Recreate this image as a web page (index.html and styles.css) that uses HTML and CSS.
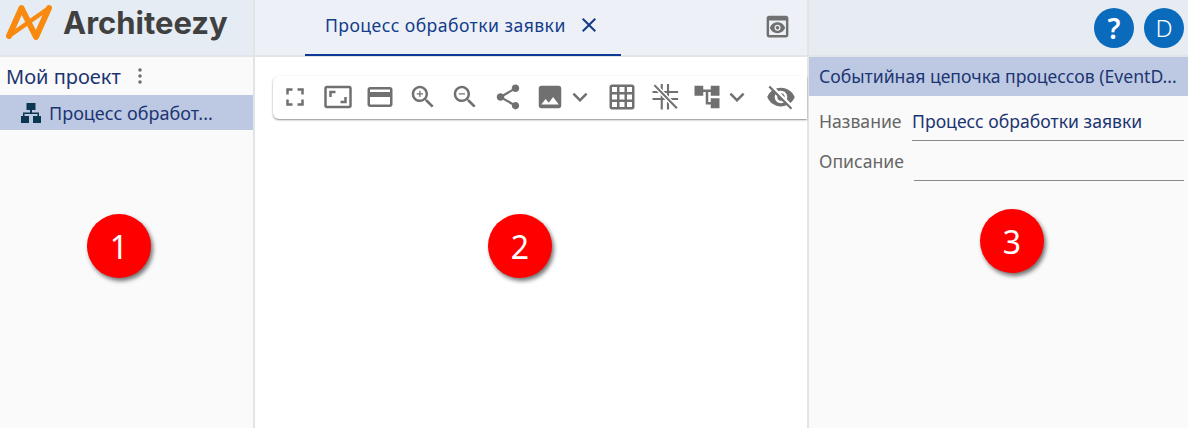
FILE: index.html
```html
<!DOCTYPE html>
<html>
<head>
  <title>Architeezy</title>
  <link rel="stylesheet" href="styles.css">
</head>
<body>
  <div class="app">
    <div class="col col-left">
      <div class="head head-left">
        <svg class="logo" viewBox="0 0 57 55" fill="none" stroke="#f98a10" stroke-linecap="round" stroke-linejoin="round">
          <path d="M9 36 21.500 8 36 37 49 8" stroke-width="6"/>
          <path d="M9 36 49 8" stroke-width="4.500"/>
        </svg>
        <span class="brand">Architeezy</span>
      </div>
      <div class="panel">
        <div class="project">
          <span>Мой проект</span>
          <svg class="dots" viewBox="0 0 6 18" fill="#6f6f6f"><circle cx="3" cy="3" r="1.800"/><circle cx="3" cy="9" r="1.800"/><circle cx="3" cy="15" r="1.800"/></svg>
        </div>
        <div class="tree-row">
          <svg class="tree-icon" viewBox="0 0 20 20" fill="#0c3551"><path d="M5.500 0h9v7H11v2.500h7V13h2v7h-8v-7h4.500v-2h-13v2H8v7H0v-7h2V9.500h7V7H5.500z"/></svg>
          <span class="ellipsis">Процесс обработ...</span>
        </div>
        <div class="marker marker-1">1</div>
      </div>
    </div>

    <div class="col col-mid">
      <div class="head head-mid">
        <div class="tab">
          <span>Процесс обработки заявки</span>
          <svg class="tab-close" viewBox="0 0 24 24" fill="#143c84"><path d="M19 6.410 17.590 5 12 10.590 6.410 5 5 6.410 10.590 12 5 17.590 6.410 19 12 13.410 17.590 19 19 17.590 13.410 12z"/></svg>
        </div>
        <svg class="preview" viewBox="0 0 24 24" fill="#707070"><path fill-rule="evenodd" d="M19 3H5c-1.110 0-2 .9-2 2v14c0 1.100.89 2 2 2h14c1.100 0 2-.9 2-2V5c0-1.100-.89-2-2-2zM5 7h14v12H5z"/><path d="M12 8.500c-2.900 0-5.300 1.800-6.300 4.500 1 2.700 3.400 4.500 6.300 4.500s5.300-1.800 6.300-4.500c-1-2.700-3.400-4.500-6.300-4.500zm0 7a2.500 2.500 0 1 1 0-5 2.500 2.500 0 0 1 0 5zm0-4a1.500 1.500 0 1 0 0 3 1.500 1.500 0 0 0 0-3z"/></svg>
      </div>
      <div class="panel panel-white">
        <div class="toolbar">
          <svg class="ico i-first" viewBox="0 0 24 24"><path d="M7 14H5v5h5v-2H7v-3zm-2-4h2V7h3V5H5v5zm12 7h-3v2h5v-5h-2v3zM14 5v2h3v3h2V5h-5z"/></svg>
          <svg class="ico" viewBox="0 0 24 24"><path d="M19 12h-2v3h-3v2h5v-5zM7 9h3V7H5v5h2V9zm14-6H3c-1.100 0-2 .9-2 2v14c0 1.100.9 2 2 2h18c1.100 0 2-.9 2-2V5c0-1.100-.9-2-2-2zm0 16.010H3V4.990h18v14.020z"/></svg>
          <svg class="ico" viewBox="0 0 24 24"><path d="M20 4H4c-1.110 0-1.990.89-1.990 2L2 18c0 1.110.89 2 2 2h16c1.110 0 2-.89 2-2V6c0-1.110-.89-2-2-2zm0 14H4v-6h16v6zm0-10H4V6h16v2z"/></svg>
          <svg class="ico" viewBox="0 0 24 24"><path d="M15.500 14h-.79l-.28-.27C15.410 12.590 16 11.110 16 9.500 16 5.910 13.090 3 9.500 3S3 5.910 3 9.500 5.910 16 9.500 16c1.610 0 3.090-.59 4.230-1.570l.27.28v.79l5 4.990L20.490 19l-4.990-5zm-6 0C7.010 14 5 11.990 5 9.500S7.010 5 9.500 5 14 7.010 14 9.500 11.990 14 9.500 14z"/><path d="M12 10h-2v2H9v-2H7V9h2V7h1v2h2v1z"/></svg>
          <svg class="ico" viewBox="0 0 24 24"><path d="M15.500 14h-.79l-.28-.27C15.410 12.590 16 11.110 16 9.500 16 5.910 13.090 3 9.500 3S3 5.910 3 9.500 5.910 16 9.500 16c1.610 0 3.090-.59 4.230-1.570l.27.28v.79l5 4.990L20.490 19l-4.990-5zm-6 0C7.010 14 5 11.990 5 9.500S7.010 5 9.500 5 14 7.010 14 9.500 11.990 14 9.500 14z"/><path d="M7 9h5v1H7z"/></svg>
          <svg class="ico" viewBox="0 0 24 24"><path d="M18 16.080c-.76 0-1.440.3-1.960.77L8.910 12.700c.05-.23.09-.46.09-.7s-.04-.47-.09-.7l7.050-4.110c.54.5 1.250.81 2.040.81 1.660 0 3-1.340 3-3s-1.340-3-3-3-3 1.340-3 3c0 .24.04.47.09.7L8.040 9.810C7.500 9.310 6.790 9 6 9c-1.660 0-3 1.340-3 3s1.340 3 3 3c.79 0 1.500-.31 2.040-.81l7.120 4.160c-.05.21-.08.43-.08.65 0 1.610 1.310 2.920 2.920 2.920 1.610 0 2.920-1.310 2.920-2.920s-1.310-2.920-2.920-2.920z"/></svg>
          <svg class="ico" viewBox="0 0 24 24"><path d="M21 19V5c0-1.100-.9-2-2-2H5c-1.100 0-2 .9-2 2v14c0 1.100.9 2 2 2h14c1.100 0 2-.9 2-2zM8.500 13.500l2.500 3.010L14.500 12l4.500 6H5l3.500-4.500z"/></svg>
          <svg class="ico i-chevron" viewBox="0 0 24 24"><path d="M16.590 8.590 12 13.170 7.410 8.590 6 10l6 6 6-6z"/></svg>
          <svg class="ico" viewBox="0 0 24 24"><path d="M20 2H4c-1.100 0-2 .9-2 2v16c0 1.100.9 2 2 2h16c1.100 0 2-.9 2-2V4c0-1.100-.9-2-2-2zM8 20H4v-4h4v4zm0-6H4v-4h4v4zm0-6H4V4h4v4zm6 12h-4v-4h4v4zm0-6h-4v-4h4v4zm0-6h-4V4h4v4zm6 12h-4v-4h4v4zm0-6h-4v-4h4v4zm0-6h-4V4h4v4z"/></svg>
          <svg class="ico i-snap" viewBox="0 0 24 24"><path d="M9.400 1.500V22M14.400 1.500V22M2 8h20.500M2 13.600h20.500"/><path class="snap-gap" d="M3.500 2.500 21.500 21"/><path d="M3.500 2.500 21.500 21"/></svg>
          <svg class="ico" viewBox="0 0 24 24"><path d="M22 11V3h-7v3H9V3H2v8h7V8h2v10h4v3h7v-8h-7v3h-2V8h2v3z"/></svg>
          <svg class="ico i-chevron" viewBox="0 0 24 24"><path d="M16.590 8.590 12 13.170 7.410 8.590 6 10l6 6 6-6z"/></svg>
          <svg class="ico i-last" viewBox="0 0 24 24"><path d="M12 7c2.760 0 5 2.240 5 5 0 .65-.13 1.260-.36 1.830l2.920 2.920c1.510-1.260 2.700-2.890 3.430-4.750-1.730-4.390-6-7.500-11-7.500-1.400 0-2.740.25-3.980.7l2.160 2.160C10.740 7.130 11.350 7 12 7zM2 4.270l2.280 2.280.46.46C3.080 8.300 1.780 10.020 1 12c1.730 4.390 6 7.500 11 7.500 1.550 0 3.030-.3 4.380-.84l.42.42L19.730 22 21 20.730 3.270 3 2 4.270zM7.530 9.800l1.550 1.550c-.05.21-.08.43-.08.65 0 1.660 1.340 3 3 3 .22 0 .44-.03.65-.08l1.550 1.550c-.67.33-1.410.53-2.200.53-2.760 0-5-2.240-5-5 0-.79.2-1.530.53-2.200zm4.310-.78l3.150 3.150.02-.16c0-1.660-1.340-3-3-3l-.17.01z"/></svg>
        </div>
        <div class="marker marker-2">2</div>
      </div>
    </div>

    <div class="col col-right">
      <div class="head head-right">
        <div class="circle circle-help">?</div>
        <div class="circle">D</div>
      </div>
      <div class="panel">
        <div class="type-row ellipsis">Событийная цепочка процессов (EventD...</div>
        <div class="field field-name">
          <span class="field-label">Название</span>
          <span class="field-value">Процесс обработки заявки</span>
        </div>
        <div class="field">
          <span class="field-label">Описание</span>
          <span class="field-value"></span>
        </div>
        <div class="marker marker-3">3</div>
      </div>
    </div>
  </div>
</body>
</html>
```

FILE: styles.css
```css
* { box-sizing: border-box; }

html, body { margin: 0; height: 100%; }

body {
  font-family: "Noto Sans", sans-serif;
  color: #1c3572;
  background: #fafafa;
  overflow: hidden;
}

.app { display: flex; height: 428px; }

.col { display: flex; flex-direction: column; }
.col-left { width: 255px; border-right: 2px solid #e2e5e8; }
.col-mid { width: 554px; border-right: 2px solid #e2e5e8; }
.col-right { flex: 1; }

.head {
  height: 57px;
  flex-shrink: 0;
  display: flex;
  align-items: center;
  border-bottom: 2px solid #e2e5e8;
}
.head-left { background: #e5ecf4; }
.head-mid { background: #edf1f7; padding-left: 50px; }
.head-right { background: #e6ecf1; justify-content: flex-end; gap: 10px; padding-right: 4px; }

.logo { width: 57px; height: 55px; flex-shrink: 0; }
.brand {
  font-family: Inter, sans-serif;
  font-weight: 700;
  font-size: 31px;
  color: #404040;
  margin: -11px 0 0 6px;
}

.panel { position: relative; flex: 1; }
.panel-white { background: #fff; padding: 19px 0 0 18px; }

.project {
  display: flex;
  align-items: center;
  gap: 16px;
  height: 38px;
  padding-left: 6px;
  font-size: 20px;
}
.dots { width: 6px; height: 18px; }

.tree-row {
  display: flex;
  align-items: center;
  height: 35px;
  padding-left: 21px;
  background: #bdc9e2;
  font-size: 18px;
}
.tree-icon { width: 20px; height: 20px; margin-right: 8px; flex-shrink: 0; }

.tab {
  display: flex;
  align-items: center;
  justify-content: space-between;
  align-self: flex-start;
  width: 316px;
  height: 56px;
  padding: 0 20px 4px 20px;
  border-bottom: 2px solid #0d3a94;
  font-size: 17.600px;
  letter-spacing: 0.44px;
  color: #133c8a;
}
.tab-close { width: 24px; height: 24px; }
.preview { width: 29px; height: 29px; margin: 0 0 3px 142px; }

.toolbar {
  display: flex;
  align-items: center;
  height: 43px;
  padding-bottom: 1px;
  background: #fff;
  border-radius: 6px 0 0 6px;
  box-shadow: 0 1px 2px rgba(0, 0, 0, 0.45);
}
.ico { width: 30px; height: 30px; flex-shrink: 0; margin-left: 12.500px; fill: #707070; }
.i-first { margin-left: 7px; }
.i-chevron { margin-left: -0.500px; }
.i-last { margin-left: 14.500px; }
.i-snap { fill: none; stroke: #707070; stroke-width: 1.700; }
.snap-gap { stroke: #fff; stroke-width: 4; }

.circle {
  width: 40px;
  height: 40px;
  border-radius: 50%;
  background: #0a6bbd;
  color: #fff;
  display: flex;
  align-items: center;
  justify-content: center;
  font-size: 24px;
  font-weight: 300;
}
.circle-help { font-weight: 600; font-size: 28px; }

.type-row {
  height: 39px;
  line-height: 39px;
  padding-left: 10px;
  background: #bdc9e2;
  font-size: 17.600px;
}
.ellipsis { white-space: nowrap; overflow: hidden; }

.field {
  display: flex;
  gap: 10.500px;
  height: 40px;
  padding: 0 4px 0 10px;
  font-size: 17.600px;
  line-height: 41px;
}
.field-name { margin-top: 5px; }
.field-label { color: #666; }
.field-value { flex: 1; height: 40px; border-bottom: 1px solid #888; }

.marker {
  position: absolute;
  width: 64px;
  height: 64px;
  border-radius: 50%;
  background: #ff0000;
  color: #fff;
  font-size: 32px;
  display: flex;
  align-items: center;
  justify-content: center;
  box-shadow: 2px 3px 4px rgba(0, 0, 0, 0.55);
}
.marker-1 { left: 87px; top: 157px; }
.marker-2 { left: 233px; top: 157px; }
.marker-3 { left: 171px; top: 152px; }
```
